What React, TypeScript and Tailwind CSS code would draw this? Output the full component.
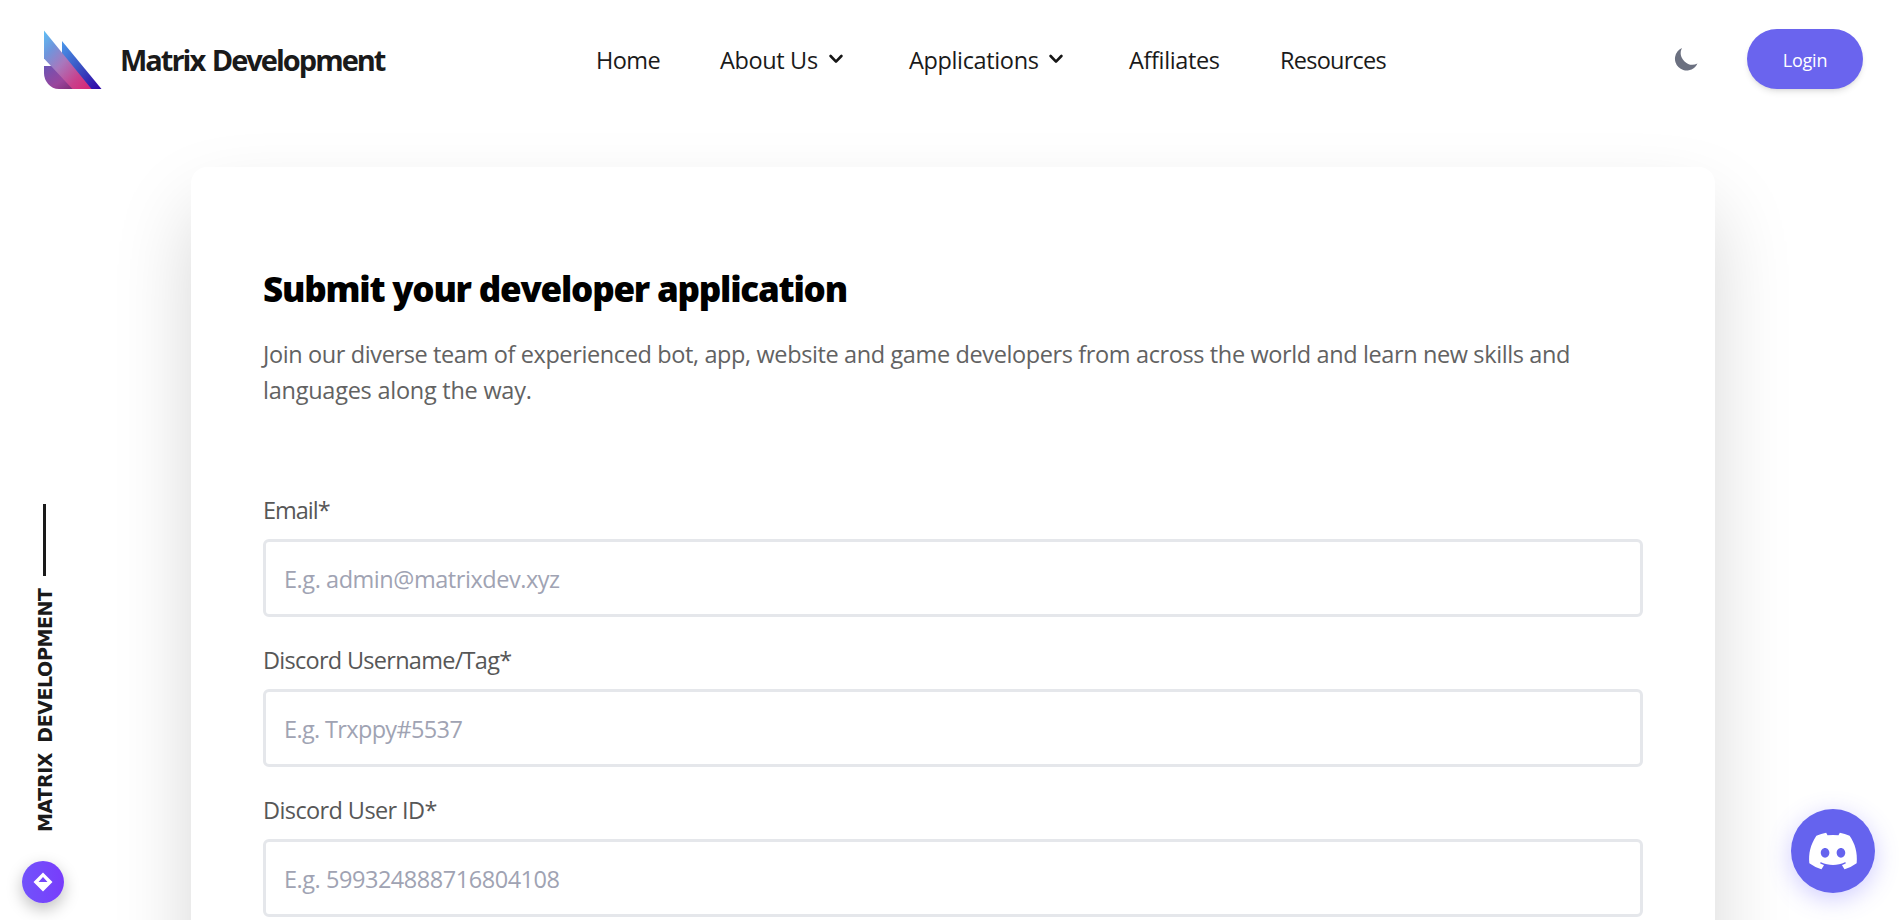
import { FaDiscord } from "react-icons/fa";
import { HiMoon } from "react-icons/hi";

function Chevron() {
  return (
    <svg viewBox="0 0 14 10" className="mb-px h-[10px] w-[14px]" fill="none" stroke="#161616" strokeWidth="2.6" strokeLinecap="round" strokeLinejoin="round">
      <path d="M1.6 2 L7 7.6 L12.4 2" />
    </svg>
  );
}

function Logo() {
  return (
    <svg viewBox="0 0 60 60" className="h-[60px] w-[60px]">
      <defs>
        <linearGradient id="wing" x1="0" y1="0" x2="0.9" y2="1">
          <stop offset="0" stopColor="#5fc0f5" />
          <stop offset="0.25" stopColor="#6f95dc" />
          <stop offset="0.5" stopColor="#a878bd" />
          <stop offset="0.8" stopColor="#c9408c" />
          <stop offset="1" stopColor="#d42a78" />
        </linearGradient>
        <linearGradient id="back" x1="0" y1="0" x2="0.9" y2="1">
          <stop offset="0" stopColor="#4a97ea" />
          <stop offset="0.5" stopColor="#3a55c4" />
          <stop offset="1" stopColor="#3009a8" />
        </linearGradient>
        <linearGradient id="tail" x1="0" y1="0" x2="1" y2="1">
          <stop offset="0" stopColor="#6a55b5" />
          <stop offset="0.6" stopColor="#9a459c" />
          <stop offset="1" stopColor="#7c2a72" />
        </linearGradient>
      </defs>
      <path d="M19 11 L58.500 59 H40 L19 33 Z" fill="url(#back)" />
      <path d="M1 36 H10 L32 59 H16 C7 59 1 51 1 43 Z" fill="url(#tail)" />
      <path d="M1 0.500 L48.500 59 H29.500 L1 28.500 Z" fill="url(#wing)" />
    </svg>
  );
}

const fields = [
  { label: "Email*", labelClass: "tracking-[-1px]", hint: "E.g. admin@matrixdev.xyz", hintClass: "tracking-[-0.45px]" },
  { label: "Discord Username/Tag*", labelClass: "tracking-[-0.72px]", hint: "E.g. Trxppy#5537", hintClass: "tracking-[-0.65px]" },
  { label: "Discord User ID*", labelClass: "tracking-[-0.6px]", hint: "E.g. 599324888716804108", hintClass: "tracking-[-0.46px]" },
];

export default function App() {
  return (
    <div className="relative h-[920px] w-full overflow-hidden bg-white font-['Open_Sans',sans-serif] text-[23.5px] leading-9 text-[#1a1a1a]">
      <header className="flex h-[119px] items-center pl-[43px]">
        <Logo />
        <span className="ml-[17px] w-[476px] whitespace-nowrap text-[29px] font-bold tracking-[-2px] [word-spacing:2px]">Matrix Development</span>
        <nav className="flex flex-1 items-center whitespace-nowrap tracking-[-0.36px]">
          <a className="w-[124px] tracking-[-0.6px]">Home</a>
          <a className="flex w-[189px] items-center justify-between pr-[66px]">About Us<Chevron /></a>
          <a className="flex w-[220px] items-center justify-between pr-[66px]">Applications<Chevron /></a>
          <a className="w-[151px]">Affiliates</a>
          <a className="tracking-[-0.75px]">Resources</a>
        </nav>
        <HiMoon className="mb-px mr-[46px] size-[29.5px] text-[#6b7080]" />
        <button className="mb-px mr-[41px] h-[60px] w-[116px] rounded-full bg-[#6a64ee] pt-px text-[18px] tracking-[-0.2px] text-white shadow-md">Login</button>
      </header>

      <main className="ml-[191px] mt-12 h-[1200px] w-[1524px] rounded-2xl bg-white px-[72px] pt-[98px] shadow-[0_40px_82px_-5px_rgba(0,0,0,0.18)]">
        <h1 className="whitespace-nowrap text-[35px] font-extrabold leading-[48px] tracking-[-1.22px] text-black">Submit your developer application</h1>
        <p className="mt-[23px] whitespace-nowrap tracking-[-0.38px] text-[#626262]">
          Join our diverse team of experienced bot, app, website and game developers from across the world and learn new skills and
          <br />
          <span className="tracking-[-0.25px]">languages along the way.</span>
        </p>
        <form className="mt-[84px] flex flex-col gap-[25px]">
          {fields.map((f) => (
            <label key={f.label} className="flex flex-col gap-[11px] text-[#575757]">
              <span className={f.labelClass}>{f.label}</span>
              <input placeholder={f.hint} className={"h-[78px] w-[1380px] rounded-md border-3 border-[#e5e7eb] px-[18px] pt-[2px] placeholder:text-[#a0a3b3] " + f.hintClass} />
            </label>
          ))}
        </form>
      </main>

      <aside className="absolute left-[22px] top-[504px] flex w-[46px] flex-col items-center">
        <div className="mr-px h-[72px] w-[3px] bg-[#1a1a1a]" />
        <div className="mt-3 flex h-[244px] rotate-180 items-center [writing-mode:vertical-rl]">
          <span className="whitespace-nowrap font-['DejaVu_Sans',sans-serif] text-[19px] font-bold leading-5 tracking-[-0.4px] [word-spacing:4px]">MATRIX DEVELOPMENT</span>
        </div>
      </aside>
      <div className="absolute left-[22px] top-[861px] flex size-[42px] items-center justify-center rounded-full bg-linear-to-r from-[#7152fb] to-[#783cfb] shadow-[0_6px_16px_rgba(0,0,0,0.25)]">
        <svg viewBox="0 0 20 20" className="mr-px size-5"><path fill="#fff" fillRule="evenodd" d="M10 0.500 L19.500 10 L10 19.500 L0.500 10 Z M10 5 L5.500 10 H14.500 Z" /></svg>
      </div>
      <div className="absolute left-[1791px] top-[809px] flex size-[84px] items-center justify-center rounded-full bg-[#6563ee] shadow-[0_6px_24px_rgba(99,91,255,0.3)]">
        <FaDiscord className="size-[52px] text-white" />
      </div>
    </div>
  );
}
